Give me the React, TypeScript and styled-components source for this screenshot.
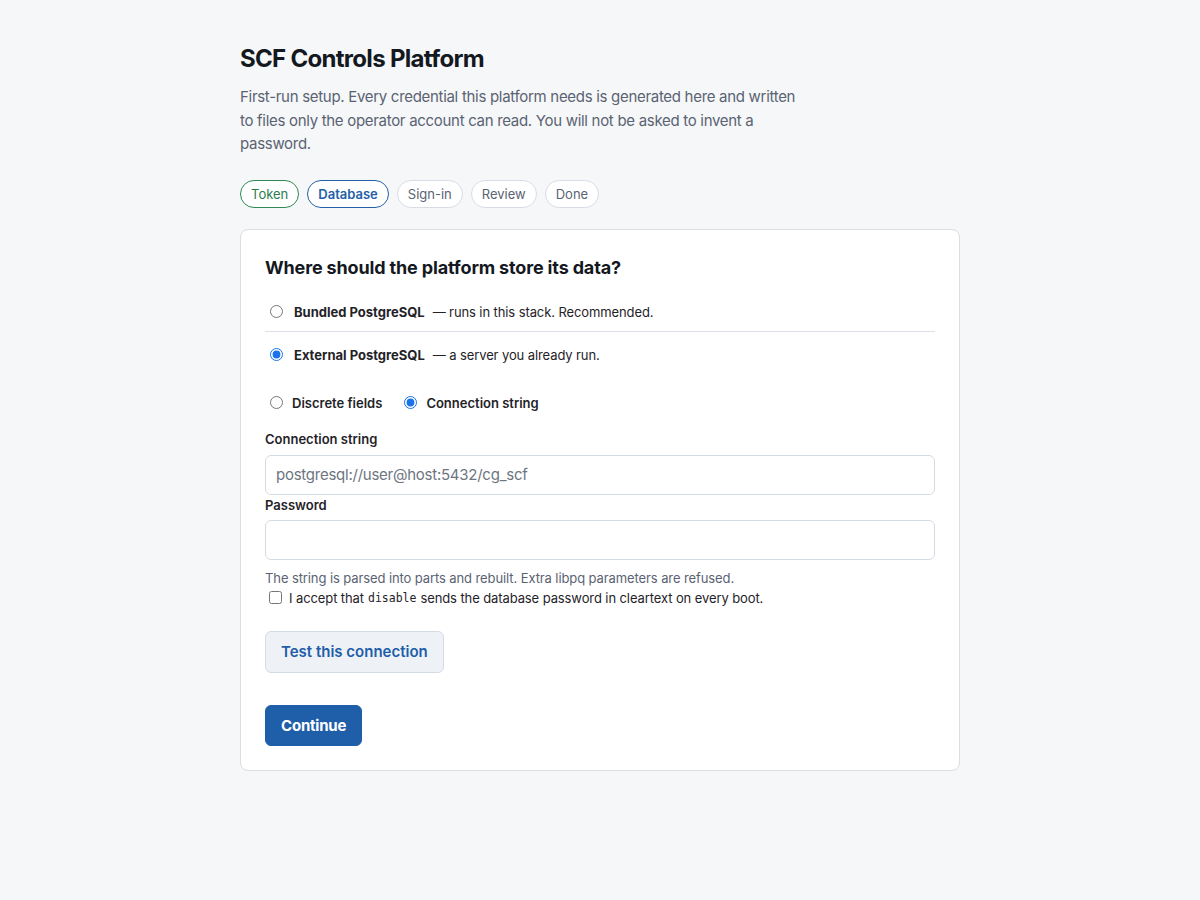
import React, { useState } from "react";
import styled, { createGlobalStyle } from "styled-components";

const GlobalStyle = createGlobalStyle`
  html, body {
    margin: 0;
    padding: 0;
    background: #f6f7f9;
    font-family: Inter, "Noto Sans", "Liberation Sans", sans-serif;
    color: #1f2328;
    -webkit-font-smoothing: antialiased;
  }
  * { box-sizing: border-box; }
`;

const Page = styled.main`
  width: 720px;
  margin: 0 auto;
  padding: 43px 0 40px;
`;

const Title = styled.h1`
  margin: 0;
  font-size: 24px;
  line-height: 32px;
  font-weight: 700;
  color: #14181f;
  letter-spacing: -0.7px;
`;

const Intro = styled.p`
  margin: 10px 0 0;
  max-width: 570px;
  font-size: 15px;
  line-height: 23.5px;
  color: #5a6372;
  letter-spacing: -0.3px;
`;

const Steps = styled.ol`
  list-style: none;
  display: flex;
  gap: 8px;
  margin: 24px 0 0;
  padding: 0;
`;

type StepState = "done" | "current" | "todo";

const Step = styled.li<{ $state: StepState }>`
  height: 28px;
  padding: 0 10px;
  display: flex;
  align-items: center;
  border-radius: 999px;
  font-size: 13px;
  background: #fff;
  border: 1px solid
    ${(p) => (p.$state === "done" ? "#2f8a55" : p.$state === "current" ? "#2460a7" : "#d8dde5")};
  color: ${(p) => (p.$state === "done" ? "#2a7d4c" : p.$state === "current" ? "#2460a7" : "#5a6372")};
  font-weight: ${(p) => (p.$state === "current" ? 600 : 400)};
`;

const Card = styled.section`
  margin-top: 21px;
  background: #fff;
  border: 1px solid #d9dee5;
  border-radius: 8px;
  padding: 24px 24px 24px;
`;

const CardTitle = styled.h2`
  margin: 0;
  font-size: 18px;
  line-height: 28px;
  font-weight: 700;
  color: #14181f;
  letter-spacing: -0.15px;
`;

const Options = styled.div`
  margin-top: 7px;
  display: flex;
  flex-direction: column;
`;

const OptionRow = styled.label<{ $divided?: boolean }>`
  display: flex;
  align-items: center;
  padding: 14px 0 10px;
  font-size: 13px;
  line-height: 18px;
  border-bottom: ${(p) => (p.$divided ? "1px solid #dde1e7" : "none")};
  cursor: pointer;
`;

const Radio = styled.input.attrs({ type: "radio" })`
  width: 13px;
  height: 13px;
  margin: 0 3px 0 5px;
  accent-color: #1a73e8;
`;

const OptionName = styled.strong`
  font-weight: 700;
  margin-left: 8px;
  margin-right: 8px;
  color: #1f2328;
`;

const OptionNote = styled.span`
  color: #1f2328;
  letter-spacing: -0.1px;
`;

const ModeRow = styled.div`
  display: flex;
  align-items: center;
  gap: 17px;
  margin-top: 20px;
`;

const ModeChoice = styled.label`
  display: flex;
  align-items: center;
  font-size: 13px;
  line-height: 18px;
  font-weight: 600;
  cursor: pointer;
  span {
    margin-left: 6px;
  }
`;

const Field = styled.div<{ $first?: boolean }>`
  display: flex;
  flex-direction: column;
  gap: ${(p) => (p.$first ? "7px" : "6px")};
  margin-top: ${(p) => (p.$first ? "18px" : "1px")};
`;

const FieldLabel = styled.label`
  font-size: 13px;
  line-height: 18px;
  font-weight: 600;
  color: #1f2328;
`;

const TextInput = styled.input`
  height: 40px;
  width: 100%;
  border: 1px solid #d5dbe3;
  border-radius: 6px;
  padding: 0 10px;
  font-family: inherit;
  font-size: 15px;
  letter-spacing: -0.25px;
  color: #1f2328;
  background: #fff;
  &::placeholder {
    color: #6e7581;
  }
`;

const Help = styled.p`
  margin: 9px 0 0;
  font-size: 13px;
  line-height: 18px;
  color: #5a6372;
  letter-spacing: -0.1px;
`;

const AcceptRow = styled.label`
  display: flex;
  align-items: center;
  margin-top: 2px;
  font-size: 13px;
  line-height: 18px;
  color: #1f2328;
  letter-spacing: -0.1px;
  cursor: pointer;
`;

const Check = styled.input.attrs({ type: "checkbox" })`
  width: 13px;
  height: 13px;
  margin: 0 7px 0 4px;
`;

const Code = styled.code`
  font-family: "DejaVu Sans Mono", "Liberation Mono", monospace;
  font-size: 11.5px;
  letter-spacing: 0;
  margin: 0 4px;
`;

const Button = styled.button<{ $primary?: boolean }>`
  display: block;
  height: ${(p) => (p.$primary ? "41px" : "42px")};
  padding: 0 15px;
  border-radius: 6px;
  font-family: inherit;
  font-size: 15px;
  letter-spacing: ${(p) => (p.$primary ? "-0.2px" : "0")};
  font-weight: ${(p) => (p.$primary ? 700 : 600)};
  cursor: pointer;
  border: 1px solid ${(p) => (p.$primary ? "#1f5ea8" : "#d6dce5")};
  background: ${(p) => (p.$primary ? "#1f5ea8" : "#eef2f7")};
  color: ${(p) => (p.$primary ? "#ffffff" : "#1f5ea8")};
`;

const Actions = styled.div`
  display: flex;
  flex-direction: column;
  align-items: flex-start;
  gap: 32px;
  margin-top: 24px;
`;

const steps: { label: string; state: StepState }[] = [
  { label: "Token", state: "done" },
  { label: "Database", state: "current" },
  { label: "Sign-in", state: "todo" },
  { label: "Review", state: "todo" },
  { label: "Done", state: "todo" },
];

export default function App() {
  const [store, setStore] = useState("external");
  const [mode, setMode] = useState("string");
  const [accept, setAccept] = useState(false);

  return (
    <>
      <GlobalStyle />
      <Page>
        <Title>SCF Controls Platform</Title>
        <Intro>
          First-run setup. Every credential this platform needs is generated here and written to
          files only the operator account can read. You will not be asked to invent a password.
        </Intro>
        <Steps>
          {steps.map((s) => (
            <Step key={s.label} $state={s.state}>
              {s.label}
            </Step>
          ))}
        </Steps>
        <Card>
          <CardTitle>Where should the platform store its data?</CardTitle>
          <Options>
            <OptionRow $divided>
              <Radio
                name="store"
                checked={store === "bundled"}
                onChange={() => setStore("bundled")}
              />
              <OptionName>Bundled PostgreSQL</OptionName>
              <OptionNote>— runs in this stack. Recommended.</OptionNote>
            </OptionRow>
            <OptionRow>
              <Radio
                name="store"
                checked={store === "external"}
                onChange={() => setStore("external")}
              />
              <OptionName>External PostgreSQL</OptionName>
              <OptionNote>— a server you already run.</OptionNote>
            </OptionRow>
          </Options>

          <ModeRow>
            <ModeChoice>
              <Radio name="mode" checked={mode === "fields"} onChange={() => setMode("fields")} />
              <span>Discrete fields</span>
            </ModeChoice>
            <ModeChoice>
              <Radio name="mode" checked={mode === "string"} onChange={() => setMode("string")} />
              <span>Connection string</span>
            </ModeChoice>
          </ModeRow>

          <Field $first>
            <FieldLabel htmlFor="dsn">Connection string</FieldLabel>
            <TextInput id="dsn" placeholder="postgresql://user@host:5432/cg_scf" />
          </Field>
          <Field>
            <FieldLabel htmlFor="pw">Password</FieldLabel>
            <TextInput id="pw" type="password" />
          </Field>
          <Help>The string is parsed into parts and rebuilt. Extra libpq parameters are refused.</Help>
          <AcceptRow>
            <Check checked={accept} onChange={() => setAccept(!accept)} />
            I accept that<Code>disable</Code>sends the database password in cleartext on every boot.
          </AcceptRow>

          <Actions>
            <Button type="button">Test this connection</Button>
            <Button type="button" $primary>
              Continue
            </Button>
          </Actions>
        </Card>
      </Page>
    </>
  );
}
